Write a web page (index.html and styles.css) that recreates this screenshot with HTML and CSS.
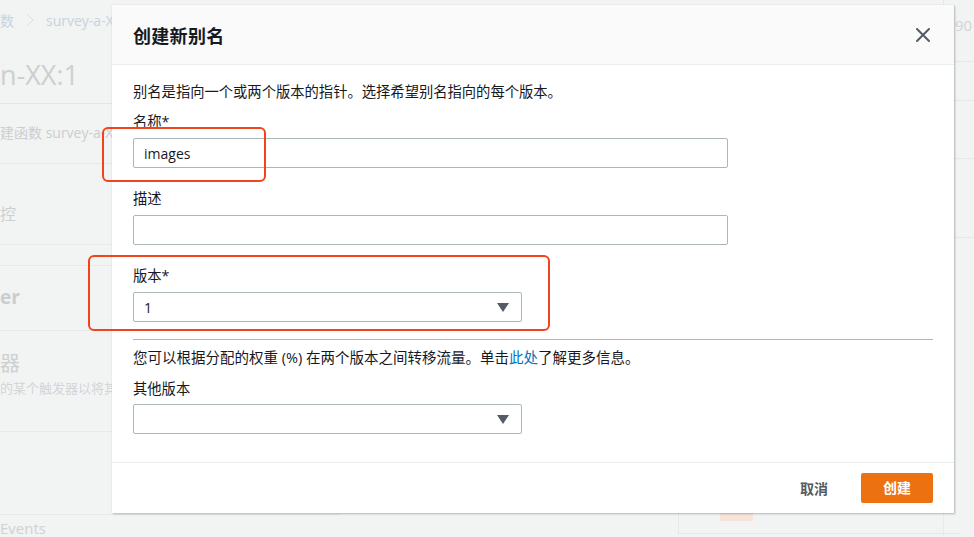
FILE: index.html
```html
<!DOCTYPE html>
<html>
<head>
  <meta charset="UTF-8">
  <title>创建新别名</title>
  <link rel="stylesheet" href="styles.css">
</head>
<body>
  <div class="page">
    <div class="left">
      <div class="crumbs">
        <span>数</span>
        <svg class="sep" width="8" height="14" viewBox="0 0 8 14"><path d="M1 1 L7 7 L1 13" fill="none" stroke="#d9dee1" stroke-width="1"/></svg>
        <span>survey-a-XX</span>
      </div>
      <div class="fn-title">n-XX:1</div>
      <div class="fn-desc">建函数 survey-a-XX</div>
      <div class="section-a">控</div>
      <div class="gap-line"></div>
      <div class="section-b">er</div>
      <div class="section-c">
        <div class="big">器</div>
        <div class="small">的某个触发器以将其</div>
      </div>
      <div class="section-d"></div>
      <div class="events">Events</div>
    </div>
    <div class="right">
      <div class="r-top">90</div>
      <div class="r-row"></div>
      <div class="r-row tall"></div>
      <div class="r-row taller"></div>
    </div>
    <div class="bottom-card"><span class="tag"></span></div>
  </div>

  <div class="modal">
    <div class="modal-head">
      <h2>创建新别名</h2>
      <svg class="close" width="16" height="16" viewBox="0 0 16 16">
        <path d="M2 2 L14 14 M14 2 L2 14" stroke="#545b64" stroke-width="2" stroke-linecap="round"/>
      </svg>
    </div>

    <div class="modal-body">
      <p class="intro">别名是指向一个或两个版本的指针。选择希望别名指向的每个版本。</p>

      <label class="label">名称*</label>
      <div class="input wide">images</div>

      <label class="label">描述</label>
      <div class="input wide"></div>

      <label class="label">版本*</label>
      <div class="input select">1<span class="arrow"></span></div>

      <hr class="divider">

      <p class="note">您可以根据分配的权重 (%) 在两个版本之间转移流量。单击<a href="#">此处</a>了解更多信息。</p>

      <label class="label">其他版本</label>
      <div class="input select"><span class="arrow"></span></div>
    </div>

    <div class="modal-foot">
      <span class="cancel">取消</span>
      <span class="create">创建</span>
    </div>
  </div>

  <!-- annotation boxes -->
  <div class="mark mark-name"></div>
  <div class="mark mark-version"></div>
</body>
</html>
```

FILE: styles.css
```css
body {
  margin: 0;
  background-color: #f2f3f3;
  font-family: 'Open Sans', 'Noto Sans CJK SC', sans-serif;
  color: #16191f;
  overflow: hidden;
}

.page {
  position: relative;
  display: flex;
  height: 537px;
  overflow: hidden;
}

/* faded page behind the dialog */
.left {
  width: 340px;
  color: #cdd0d1;
}

.crumbs {
  height: 40px;
  font-size: 14px;
  color: #c6d3df;
  display: flex;
  align-items: center;
  gap: 12px;
}

.fn-title {
  height: 63px;
  line-height: 70px;
  font-size: 27px;
  color: #cdcfd0;
  border-bottom: 1px solid #e4e6e6;
}

.fn-desc {
  height: 59px;
  line-height: 58px;
  font-size: 14px;
  color: #cbcecf;
  border-bottom: 1px solid #e6e8e8;
}

.section-a {
  height: 80px;
  line-height: 100px;
  font-size: 16px;
  border-bottom: 1px solid #e8eaea;
}

.gap-line {
  height: 20px;
  border-bottom: 1px solid #e8eaea;
}

.section-b {
  height: 64px;
  line-height: 62px;
  font-size: 19px;
  font-weight: bold;
  color: #cbcecf;
  border-bottom: 1px solid #e8eaea;
}

.section-c {
  height: 100px;
  border-bottom: 1px solid #e8eaea;
}

.section-c .big {
  font-size: 20px;
  padding-top: 19px;
  line-height: 28px;
}

.section-c .small {
  font-size: 13px;
  color: #d3d5d6;
}

.section-d {
  height: 82px;
  border-bottom: 1px solid #e8eaea;
}

.events {
  font-size: 15px;
  line-height: 26px;
  color: #cfd2d3;
}

.right {
  margin-left: auto;
  width: 30px;
  border-left: 1px solid #e8eaea;
}

.r-top {
  height: 61px;
  line-height: 50px;
  font-size: 15px;
  color: #d0d3d4;
  padding-left: 11px;
  border-bottom: 1px solid #e6e8e8;
}

.r-row {
  height: 38px;
  border-bottom: 1px solid #e6e8e8;
}

.r-row.tall {
  height: 57px;
}

.r-row.taller {
  height: 78px;
}

.bottom-card {
  position: absolute;
  left: 678px;
  top: 505px;
  width: 282px;
  height: 28px;
  border-left: 1px solid #e6e8e8;
  border-bottom: 1px solid #e6e8e8;
}

.bottom-card .tag {
  display: block;
  margin: 8px 0 0 41px;
  width: 33px;
  height: 8px;
  background-color: #f6e3da;
}

/* dialog */
.modal {
  position: absolute;
  left: 112px;
  top: 5px;
  width: 842px;
  height: 508px;
  background-color: white;
  display: flex;
  flex-direction: column;
  box-shadow: 1px 1px 2px rgba(0, 0, 0, 0.25), 0 0 1px rgba(0, 0, 0, 0.12);
}

.modal-head {
  height: 59px;
  padding: 0 21px;
  display: flex;
  align-items: center;
  justify-content: space-between;
  background-color: #fafafa;
  border-bottom: 1px solid #eaeded;
}

.modal-head h2 {
  margin: 0;
  font-size: 18px;
  font-weight: bold;
  color: #16191f;
  letter-spacing: 0.3px;
}

.close {
  margin-right: 2px;
}

.modal-body {
  flex: 1;
  padding: 17px 21px 0;
  font-size: 14px;
}

.intro,
.note {
  margin: 0;
  line-height: 20px;
  font-size: 14.3px;
}

.note {
  margin-top: 8px;
  font-size: 14.5px;
}

.note a {
  color: #0073bb;
  text-decoration: none;
}

.label {
  display: block;
  line-height: 20px;
  margin-top: 10px;
  margin-bottom: 6px;
  font-size: 14.3px;
}

.input + .label {
  margin-top: 21px;
}

.note + .label {
  margin-top: 11px;
  margin-bottom: 5px;
}

.input {
  box-sizing: border-box;
  height: 30px;
  line-height: 30px;
  padding: 0 10px;
  border: 1px solid #aab7b8;
  border-radius: 2px;
  font-size: 14px;
  color: #16191f;
  position: relative;
}

.input.wide {
  width: 595px;
}

.input.select {
  width: 389px;
}

.arrow {
  position: absolute;
  right: 12px;
  top: 10px;
  width: 0;
  height: 0;
  border-left: 6px solid transparent;
  border-right: 6px solid transparent;
  border-top: 9px solid #545b64;
}

.divider {
  margin: 17px 0 0;
  border: none;
  border-top: 1px solid #aab7b8;
}

.modal-foot {
  height: 50px;
  border-top: 1px solid #eaeded;
  display: flex;
  align-items: center;
  justify-content: flex-end;
  padding: 0 21px;
  gap: 33px;
  font-size: 14px;
  font-weight: bold;
}

.cancel {
  color: #545b64;
}

.create {
  width: 72px;
  height: 30px;
  line-height: 30px;
  text-align: center;
  color: white;
  background-color: #ec7211;
  border-radius: 2px;
}

/* red annotation frames */
.mark {
  position: absolute;
  border: 2.5px solid #f2441b;
  border-radius: 6px;
  box-sizing: border-box;
}

.mark-name {
  left: 102px;
  top: 127px;
  width: 164px;
  height: 55px;
}

.mark-version {
  left: 88px;
  top: 255px;
  width: 462px;
  height: 76px;
}
```
